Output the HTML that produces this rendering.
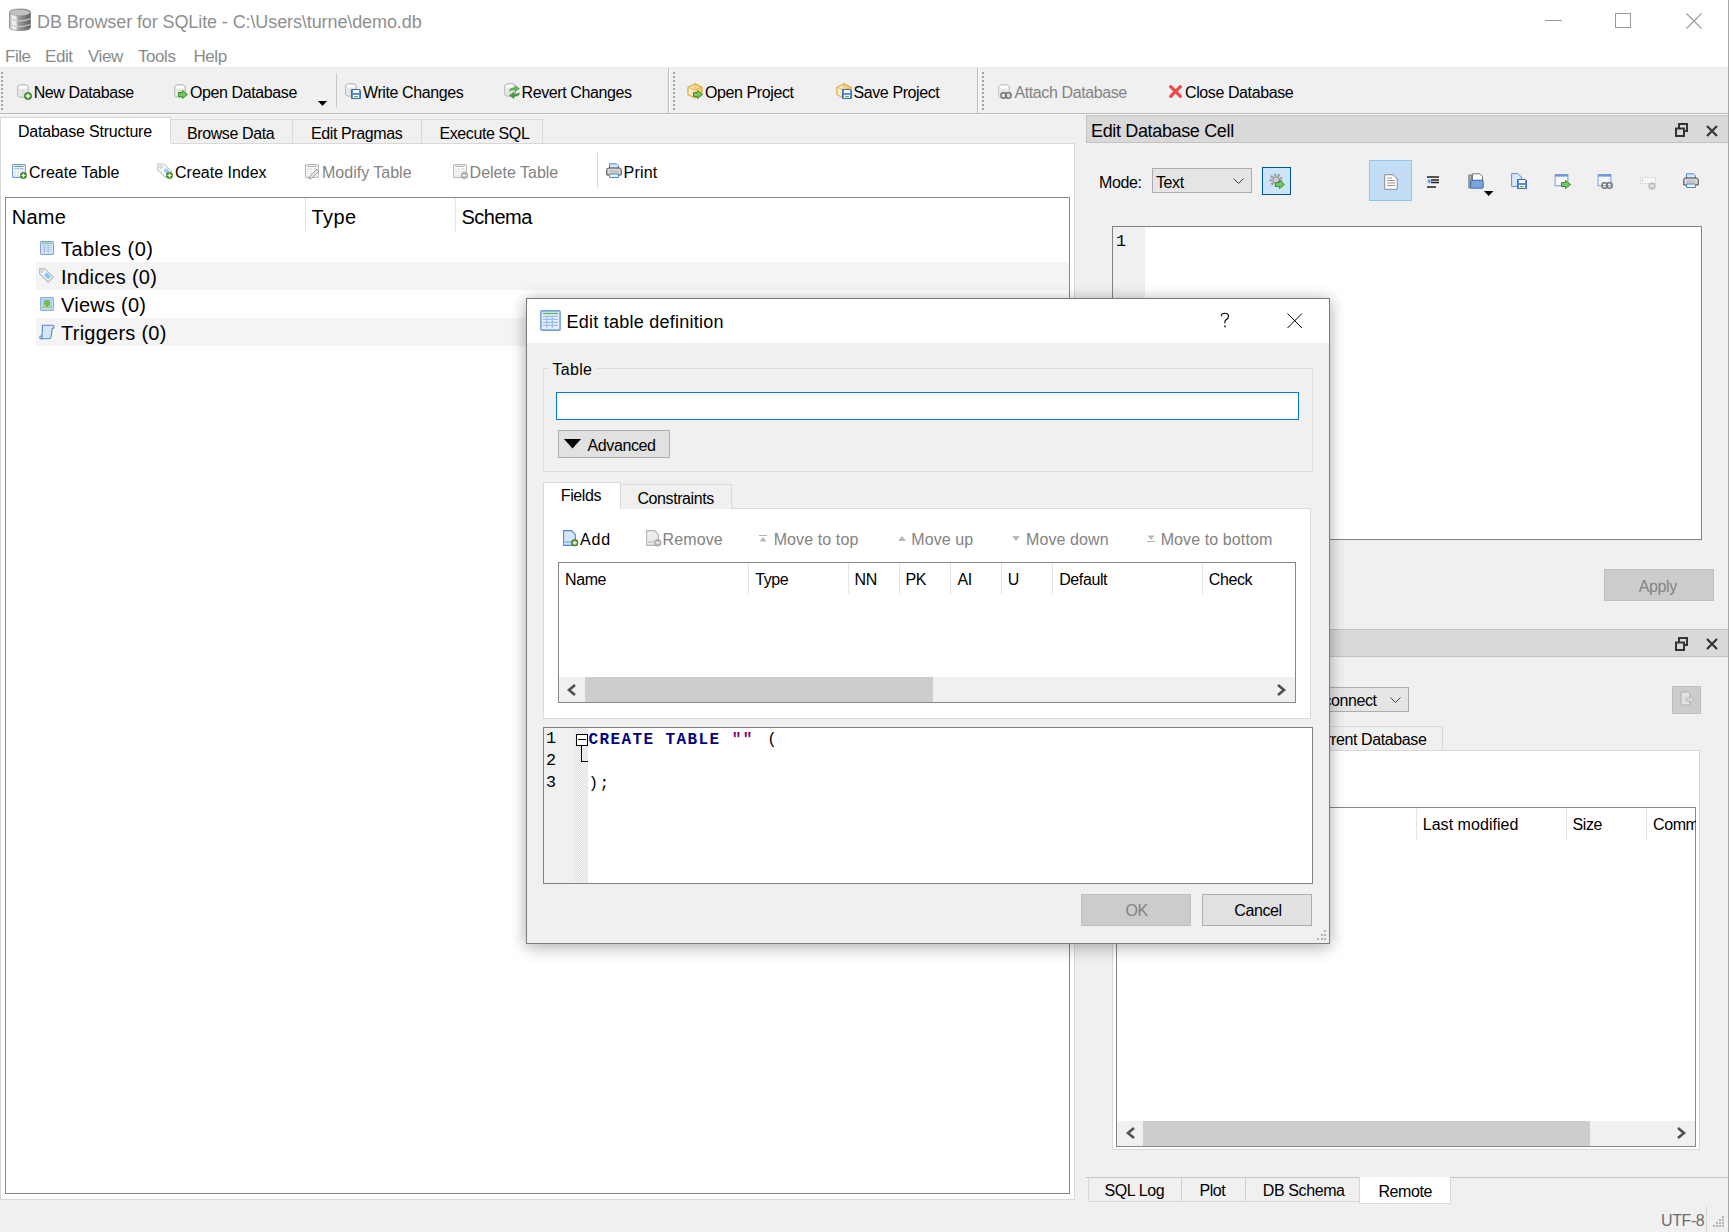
<!DOCTYPE html>
<html><head><meta charset="utf-8">
<style>
*{box-sizing:border-box;margin:0;padding:0}
html,body{width:1729px;height:1232px;overflow:hidden;background:#f0f0f0;font-family:"Liberation Sans",sans-serif;color:#000}
.a{position:absolute}
.t{position:absolute;white-space:nowrap;line-height:1;font-size:16px;letter-spacing:-0.4px}
.dis{color:#838383}
.ln{position:absolute;background:#a0a0a0}
svg{position:absolute;overflow:visible}
</style></head><body>

<!-- ============ TITLE BAR ============ -->
<div class="a" style="left:0;top:0;width:1729px;height:68px;background:#fff"></div>
<svg style="left:9px;top:8px" width="23" height="23" viewBox="0 0 23 23">
  <defs><linearGradient id="dbg" x1="0" x2="1"><stop offset="0" stop-color="#a8a8a8"/><stop offset="0.15" stop-color="#f4f4f4"/><stop offset="0.3" stop-color="#e8e8e8"/><stop offset="0.42" stop-color="#a0a0a0"/><stop offset="1" stop-color="#5e5e5e"/></linearGradient></defs>
  <path d="M0.5 4.5 Q0.5 1 11 1 Q21.5 1 21.5 4.5 L21.5 19.5 Q21.5 22.5 11 22.5 Q0.5 22.5 0.5 19.5 Z" fill="url(#dbg)" stroke="#707070" stroke-width="0.6"/>
  <ellipse cx="11" cy="4.6" rx="10" ry="3.2" fill="#c2c2c2" stroke="#8a8a8a" stroke-width="0.5"/>
  <path d="M0.8 10.8 Q11 15 21.2 10.8" stroke="#c8c8c8" stroke-width="1.3" fill="none"/>
  <path d="M0.8 16.5 Q11 20.7 21.2 16.5" stroke="#c8c8c8" stroke-width="1.3" fill="none"/>
</svg>
<div class="t" style="left:37px;top:12.8px;font-size:18px;letter-spacing:-0.1px;color:#8f8f8f">DB Browser for SQLite - C:\Users\turne\demo.db</div>
<!-- window controls -->
<div class="a" style="left:1545px;top:20px;width:17px;height:1px;background:#9a9a9a"></div>
<div class="a" style="left:1615px;top:13px;width:16px;height:15px;border:1px solid #9a9a9a"></div>
<svg style="left:1686px;top:13px" width="16" height="16" viewBox="0 0 16 16"><path d="M0.5 0.5 L15.5 15.5 M15.5 0.5 L0.5 15.5" stroke="#9a9a9a" stroke-width="1.1"/></svg>

<!-- menu -->
<div class="t" style="left:5px;top:48.4px;font-size:17px;color:#8a8a8a;letter-spacing:-0.45px">File</div>
<div class="t" style="left:45px;top:48.4px;font-size:17px;color:#8a8a8a;letter-spacing:-0.45px">Edit</div>
<div class="t" style="left:88px;top:48.4px;font-size:17px;color:#8a8a8a;letter-spacing:-0.45px">View</div>
<div class="t" style="left:138px;top:48.4px;font-size:17px;color:#8a8a8a;letter-spacing:-0.45px">Tools</div>
<div class="t" style="left:193.5px;top:48.4px;font-size:17px;color:#8a8a8a;letter-spacing:-0.45px">Help</div>

<!-- ============ TOOLBAR ============ -->
<div class="a" style="left:0;top:67px;width:1729px;height:1px;background:#ececec"></div>
<div class="a" style="left:0;top:69px;width:1729px;height:44px;background:#f0f0f0"></div>
<div class="a" style="left:0;top:113px;width:1729px;height:1px;background:#b8b8b8"></div>
<div class="a" style="left:0;top:114px;width:1729px;height:1px;background:#fbfbfb"></div>
<!-- handles -->
<div class="a" style="left:1px;top:72px;width:2px;height:38px;background:repeating-linear-gradient(to bottom,#a4a4a4 0 2px,transparent 2px 4px)"></div>
<div class="a" style="left:668px;top:68px;width:1px;height:45px;background:#b8b8b8"></div>
<div class="a" style="left:669px;top:68px;width:1px;height:45px;background:#fff"></div>
<div class="a" style="left:673px;top:72px;width:2px;height:38px;background:repeating-linear-gradient(to bottom,#a4a4a4 0 2px,transparent 2px 4px)"></div>
<div class="a" style="left:977px;top:68px;width:1px;height:45px;background:#b8b8b8"></div>
<div class="a" style="left:978px;top:68px;width:1px;height:45px;background:#fff"></div>
<div class="a" style="left:982px;top:72px;width:2px;height:38px;background:repeating-linear-gradient(to bottom,#a4a4a4 0 2px,transparent 2px 4px)"></div>
<div class="a" style="left:336px;top:73px;width:1px;height:35px;background:#c8c8c8"></div>

<div class="t" style="left:33.7px;top:84.6px">New Database</div>
<div class="t" style="left:190px;top:84.6px">Open Database</div>
<svg style="left:318px;top:101px" width="10" height="6"><path d="M0 0 L9 0 L4.5 5 Z" fill="#000"/></svg>
<div class="t" style="left:363px;top:84.6px">Write Changes</div>
<div class="t" style="left:521.5px;top:84.6px">Revert Changes</div>
<div class="t" style="left:705px;top:84.6px">Open Project</div>
<div class="t" style="left:853.5px;top:84.6px">Save Project</div>
<div class="t dis" style="left:1014.5px;top:84.6px">Attach Database</div>
<div class="t" style="left:1185px;top:84.6px">Close Database</div>

<!-- ============ MAIN TABS ============ -->
<div class="a" style="left:170px;top:119px;width:373px;height:26px;background:#f0f0f0;border:1px solid #d9d9d9;border-bottom:none"></div>
<div class="a" style="left:292px;top:119px;width:1px;height:26px;background:#d9d9d9"></div>
<div class="a" style="left:421px;top:119px;width:1px;height:26px;background:#d9d9d9"></div>
<div class="a" style="left:0;top:117px;width:171px;height:30px;background:#fff;border:1px solid #d9d9d9;border-bottom:none"></div>
<div class="t" style="left:18px;top:124px;letter-spacing:-0.22px">Database Structure</div>
<div class="t" style="left:187px;top:126.3px">Browse Data</div>
<div class="t" style="left:311px;top:126.3px">Edit Pragmas</div>
<div class="t" style="left:439.5px;top:126.3px">Execute SQL</div>

<!-- main panel -->
<div class="a" style="left:0;top:143px;width:1075px;height:1057px;background:#fff;border:1px solid #d9d9d9;border-top:none"></div>
<div class="a" style="left:171px;top:143px;width:904px;height:1px;background:#d9d9d9"></div>

<!-- inner toolbar -->
<div class="t" style="left:29px;top:165px;letter-spacing:0px">Create Table</div>
<div class="t" style="left:175px;top:165px;letter-spacing:0px">Create Index</div>
<div class="t dis" style="left:322px;top:165px;letter-spacing:0px">Modify Table</div>
<div class="t dis" style="left:469.6px;top:165px;letter-spacing:0px">Delete Table</div>
<div class="a" style="left:597px;top:153px;width:1px;height:35px;background:#d8d8d8"></div>
<div class="t" style="left:623.6px;top:165px;letter-spacing:0.2px">Print</div>

<!-- tree -->
<div class="a" style="left:5px;top:197px;width:1065px;height:997px;border:1px solid #828790;background:#fff"></div>
<div class="a" style="left:305px;top:198px;width:1px;height:35px;background:#e5e5e5"></div>
<div class="a" style="left:455px;top:198px;width:1px;height:35px;background:#e5e5e5"></div>
<div class="t" style="left:11.7px;top:206.5px;font-size:20px;letter-spacing:0.25px">Name</div>
<div class="t" style="left:311.6px;top:206.6px;font-size:20px;letter-spacing:0.4px">Type</div>
<div class="t" style="left:461.5px;top:206.6px;font-size:20px;letter-spacing:-0.5px">Schema</div>
<div class="a" style="left:36px;top:262px;width:1033px;height:28px;background:#f4f4f4"></div>
<div class="a" style="left:36px;top:318px;width:1033px;height:28px;background:#f4f4f4"></div>
<div class="t" style="left:61px;top:238.9px;font-size:20px;letter-spacing:0.45px">Tables (0)</div>
<div class="t" style="left:61px;top:266.9px;font-size:20px;letter-spacing:0.25px">Indices (0)</div>
<div class="t" style="left:61px;top:294.9px;font-size:20px;letter-spacing:0.25px">Views (0)</div>
<div class="t" style="left:61px;top:322.9px;font-size:20px;letter-spacing:0.25px">Triggers (0)</div>



<!-- ============ RIGHT DOCK 1 ============ -->
<div class="a" style="left:1086px;top:115px;width:643px;height:28px;background:#d9d9d9;border:1px solid #c2c2c2;border-right:none"></div>
<div class="t" style="left:1091px;top:121.6px;font-size:18px;letter-spacing:-0.35px">Edit Database Cell</div>
<div class="t" style="left:1099px;top:175px">Mode:</div>
<div class="a" style="left:1152px;top:168px;width:100px;height:25px;background:#e5e5e5;border:1px solid #adadad"></div>
<div class="t" style="left:1156px;top:175px">Text</div>
<svg style="left:1233px;top:178px" width="11" height="7"><path d="M0.5 0.5 L5.5 5.5 L10.5 0.5" stroke="#404040" fill="none" stroke-width="1"/></svg>
<div class="a" style="left:1262px;top:167px;width:29px;height:28px;background:#cce4f7;border:1px solid #005499"></div>
<div class="a" style="left:1369px;top:160px;width:43px;height:41px;background:#c2ddf4;border:1px solid #8ec4f0"></div>
<!-- editor -->
<div class="a" style="left:1112px;top:226px;width:590px;height:314px;background:#fff;border:1px solid #828282"></div>
<div class="a" style="left:1113px;top:227px;width:32px;height:312px;background:#f0f0f0"></div>
<div class="t" style="left:1116px;top:234.3px;font-family:'Liberation Mono',monospace;font-size:16.8px;letter-spacing:0">1</div>
<!-- apply -->
<div class="a" style="left:1604px;top:569px;width:110px;height:32px;background:#cccccc;border:1px solid #bfbfbf"></div>
<div class="t dis" style="left:1638.8px;top:578.8px">Apply</div>

<!-- ============ RIGHT DOCK 2 ============ -->
<div class="a" style="left:1086px;top:629px;width:643px;height:28px;background:#d9d9d9;border:1px solid #c2c2c2;border-right:none"></div>
<div class="a" style="left:1200px;top:687px;width:209px;height:25px;background:#e5e5e5;border:1px solid #adadad"></div>
<div class="t" style="left:1301.5px;top:692.8px">Disconnect</div>
<svg style="left:1390px;top:697px" width="11" height="7"><path d="M0.5 0.5 L5.5 5.5 L10.5 0.5" stroke="#404040" fill="none" stroke-width="1"/></svg>
<div class="a" style="left:1672px;top:686px;width:29px;height:28px;background:#cccccc;border:1px solid #bfbfbf"></div>
<!-- tab -->
<div class="a" style="left:1112px;top:750px;width:588px;height:400px;background:#fff;border:1px solid #d9d9d9"></div>
<div class="a" style="left:1240px;top:726px;width:203px;height:24px;background:#f0f0f0;border:1px solid #d9d9d9;border-bottom:none"></div>
<div class="t" style="left:1306.5px;top:732.3px">Current Database</div>
<!-- inner table -->
<div class="a" style="left:1116px;top:807px;width:580px;height:340px;background:#fff;border:1px solid #828790"></div>
<div class="a" style="left:1416px;top:808px;width:1px;height:32px;background:#e5e5e5"></div>
<div class="a" style="left:1566px;top:808px;width:1px;height:32px;background:#e5e5e5"></div>
<div class="a" style="left:1646px;top:808px;width:1px;height:32px;background:#e5e5e5"></div>
<div class="t" style="left:1422.7px;top:817px;letter-spacing:0.05px">Last modified</div>
<div class="t" style="left:1572.5px;top:817px">Size</div>
<div class="a" style="left:1653px;top:810px;width:43px;height:28px;overflow:hidden"><div class="t" style="left:0;top:7px">Comment</div></div>
<!-- scrollbar -->
<div class="a" style="left:1117px;top:1121px;width:578px;height:25px;background:#f0f0f0"></div>
<div class="a" style="left:1143px;top:1121px;width:447px;height:25px;background:#cdcdcd"></div>
<svg style="left:1125px;top:1127px" width="11" height="12"><path d="M9 1 L3 6 L9 11" stroke="#505050" stroke-width="2.6" fill="none"/></svg>
<svg style="left:1676px;top:1127px" width="11" height="12"><path d="M2 1 L8 6 L2 11" stroke="#505050" stroke-width="2.6" fill="none"/></svg>

<!-- bottom tabs -->
<div class="a" style="left:1086px;top:1177px;width:643px;height:1px;background:#c4c4c4"></div>
<div class="a" style="left:1088px;top:1178px;width:272px;height:24px;background:#f0f0f0;border:1px solid #d9d9d9;border-top:none"></div>
<div class="a" style="left:1181px;top:1178px;width:1px;height:24px;background:#d0d0d0"></div>
<div class="a" style="left:1245px;top:1178px;width:1px;height:24px;background:#d0d0d0"></div>
<div class="a" style="left:1359px;top:1177px;width:92px;height:27px;background:#fff;border:1px solid #d9d9d9;border-top:none"></div>
<div class="t" style="left:1104.4px;top:1182.9px">SQL Log</div>
<div class="t" style="left:1199.4px;top:1182.9px">Plot</div>
<div class="t" style="left:1262.8px;top:1182.9px">DB Schema</div>
<div class="t" style="left:1378.4px;top:1184px">Remote</div>

<!-- status -->
<div class="t" style="left:1661px;top:1212.9px;color:#6d6d6d">UTF-8</div>
<div class="a" style="left:1706px;top:1206px;width:1px;height:26px;background:#d9d9d9"></div>

<svg width="0" height="0" style="position:absolute;left:0;top:0">
<defs>
 <linearGradient id="gcyl" x1="0" x2="1" y1="0" y2="0"><stop offset="0" stop-color="#f4f4f4"/><stop offset="0.5" stop-color="#dcdcdc"/><stop offset="1" stop-color="#f0f0f0"/></linearGradient>
 <symbol id="cyl" viewBox="0 0 12 14"><path d="M0.7 3 Q0.7 0.7 6 0.7 Q11.3 0.7 11.3 3 L11.3 11 Q11.3 13.3 6 13.3 Q0.7 13.3 0.7 11 Z" fill="url(#gcyl)" stroke="#b4b4b4" stroke-width="1"/><ellipse cx="6" cy="3.2" rx="4.3" ry="1.6" fill="#fff"/></symbol>
 <symbol id="plusg" viewBox="0 0 8 8"><circle cx="4" cy="4" r="3.6" fill="#4e9a2a" stroke="#2f6b17" stroke-width="0.7"/><path d="M4 1.8 V6.2 M1.8 4 H6.2" stroke="#fff" stroke-width="1.4"/></symbol>
 <symbol id="arrowg" viewBox="0 0 10 9"><path d="M0.5 2.5 H4.5 V0.5 L9.5 4.5 L4.5 8.5 V6.5 H0.5 Z" fill="#7cc26a" stroke="#2e9a1a" stroke-width="1"/></symbol>
 <symbol id="floppy" viewBox="0 0 10 10"><path d="M0.5 0.5 H8.5 L9.5 1.5 V9.5 H0.5 Z" fill="#5b8ed6" stroke="#3f6fbf" stroke-width="1"/><rect x="2" y="1" width="6" height="3" fill="#fff"/><rect x="2" y="6" width="6" height="3" fill="#fff"/><rect x="3" y="7" width="4" height="1.4" fill="#6cbf3a"/></symbol>
 <symbol id="refresh" viewBox="0 0 11 14"><path d="M0.5 6 Q1 2.5 6 2.8 V0.6 L10.4 3.6 L6 6.8 V4.8 Q2.5 4.6 0.5 6 Z" fill="#62b85a" stroke="#3c9a36" stroke-width="0.6"/><path d="M10.5 8 Q10 11.5 5 11.2 V13.4 L0.6 10.4 L5 7.2 V9.2 Q8.5 9.4 10.5 8 Z" fill="#4aa046" stroke="#2c7d2a" stroke-width="0.6"/></symbol>
 <linearGradient id="gbox" x1="0" x2="1"><stop offset="0" stop-color="#fff6d8"/><stop offset="1" stop-color="#f6c860"/></linearGradient>
 <symbol id="box" viewBox="0 0 16 16"><path d="M8 0.8 L15 4.3 V11.7 L8 15.2 L1 11.7 V4.3 Z" fill="url(#gbox)" stroke="#d8a840" stroke-width="1.2"/><path d="M8 0.8 V7 M1 4.3 L8 7 L15 4.3" stroke="#e0b050" stroke-width="0.8" fill="none"/></symbol>
 <symbol id="xred" viewBox="0 0 13 13"><path d="M1.8 1.8 L11.2 11.2 M11.2 1.8 L1.8 11.2" stroke="#f04848" stroke-width="3.2" stroke-linecap="square"/></symbol>
 <symbol id="tbl" viewBox="0 0 14 14"><rect x="0.6" y="0.6" width="12.8" height="12.8" rx="1" fill="#fff" stroke="#6b98d8" stroke-width="1.1"/><path d="M2.3 2.5 H11.7" stroke="#5cb65c" stroke-width="1"/><rect x="2.3" y="4.3" width="9.4" height="7.6" fill="#c7daf3" stroke="none"/><path d="M2.3 6.5 H11.7 M2.3 8.5 H11.7 M2.3 10.5 H11.7 M4.3 4.3 V12 M7.5 4.3 V12" stroke="#fff" stroke-width="0.9"/><path d="M2.3 4.3 H11.7" stroke="#8ab0e6" stroke-width="0.8"/></symbol>
 <symbol id="tblg" viewBox="0 0 14 14"><rect x="0.6" y="0.6" width="12.8" height="12.8" rx="1" fill="#fff" stroke="#b8b8b8" stroke-width="1.1"/><path d="M2.3 2.5 H11.7" stroke="#b4b4b4" stroke-width="1"/><rect x="2.3" y="4.3" width="9.4" height="7.6" fill="#dedede"/><path d="M2.3 6.5 H11.7 M2.3 8.5 H11.7 M2.3 10.5 H11.7 M4.3 4.3 V12 M7.5 4.3 V12" stroke="#fff" stroke-width="0.9"/></symbol>
 <symbol id="tag" viewBox="0 0 16 16"><path d="M0.8 1 H7 L14.5 8.5 L8.5 14.5 L0.8 7 Z" fill="#fafafa" stroke="#c4c4c4" stroke-width="1.1"/><circle cx="4" cy="4" r="1.3" fill="none" stroke="#bdbdbd" stroke-width="0.9"/><path d="M6.5 7.5 L9 5 L13 9 L10.5 11.5 Z" fill="#8fcbf7"/></symbol>
 <symbol id="printer" viewBox="0 0 16 16"><path d="M3.5 0.8 H10.5 L12.5 2.8 V7 H3.5 Z" fill="#d6e8fb" stroke="#4a88d0" stroke-width="1"/><path d="M0.8 12 V6.5 Q0.8 5 3 5 H13 Q15.2 5 15.2 6.5 V12 Z" fill="#dcdcdc" stroke="#404040" stroke-width="1"/><rect x="3.5" y="6.8" width="9" height="3.5" fill="#c4c4c4"/><path d="M3.5 11 H12.5 V14.5 H3.5 Z" fill="#f4f4f4" stroke="#4a88d0" stroke-width="1"/></symbol>
 <symbol id="chain" viewBox="0 0 12 7"><rect x="0.8" y="0.8" width="5.6" height="5.4" rx="2.6" fill="none" stroke="#777" stroke-width="1.5"/><rect x="5.6" y="0.8" width="5.6" height="5.4" rx="2.6" fill="none" stroke="#777" stroke-width="1.5"/></symbol>
 <symbol id="doc" viewBox="0 0 14 16"><path d="M0.7 0.7 H9 L13.3 5 V15.3 H0.7 Z" fill="#fff" stroke="#8a8a8a" stroke-width="1"/><path d="M3 4 H8 M3 6.5 H11 M3 9 H11 M3 11.5 H11" stroke="#9c9c9c" stroke-width="1"/></symbol>
 <symbol id="win" viewBox="0 0 16 15"><rect x="0.6" y="0.6" width="14.8" height="13" fill="#f8f8ff" stroke="#6e9ad8" stroke-width="1.1"/><rect x="0.6" y="0.6" width="14.8" height="2.4" fill="#6e9ad8"/></symbol>
 <symbol id="tree_tbl" viewBox="0 0 14 14"><rect x="0.6" y="0.6" width="12.8" height="12.8" rx="0.8" fill="#e8f0fb" stroke="#7aa3dc" stroke-width="1.1"/><path d="M2 2.3 H12" stroke="#5cb65c" stroke-width="0.9"/><path d="M2 4.2 H12 M2 6.2 H12 M2 8.2 H12 M2 10.2 H12 M4.5 4.2 V12 M8.2 4.2 V12" stroke="#9bbbe8" stroke-width="0.8"/></symbol>
 <symbol id="tree_tag" viewBox="0 0 16 16"><path d="M0.8 1 H6.2 L15 9.8 L9.8 15 L0.8 6 Z" fill="#fbfbfb" stroke="#b4b4b4" stroke-width="1.3" stroke-linejoin="round"/><circle cx="3.6" cy="3.8" r="1.2" fill="none" stroke="#b0b0b0" stroke-width="0.9"/><path d="M5.2 7.6 L8.2 4.6 L12.8 9.2 L9.8 12.2 Z" fill="#86c6f6"/></symbol>
 <symbol id="tree_view" viewBox="0 0 14 14"><rect x="0.6" y="0.6" width="12.8" height="12.8" rx="0.8" fill="#d2e4f8" stroke="#88aadd" stroke-width="1.1"/><rect x="2" y="2" width="10" height="9" fill="#a9cdf0"/><circle cx="7" cy="6" r="3" fill="#6cc04a"/><rect x="2" y="9" width="10" height="2.4" fill="#9ed08a"/><path d="M7 8 V10" stroke="#c88a3a" stroke-width="1.2"/></symbol>
 <symbol id="tree_trig" viewBox="0 0 16 16"><path d="M3.5 1.2 H13.2 Q15 1.2 15 3 Q15 4.6 13.2 4.6 L12 13 Q11.7 14.8 10 14.8 H2 Q0.8 14.8 0.8 13.4 Q0.8 12 2.2 12 H3 Z" fill="#d6e6f8" stroke="#4f86cf" stroke-width="1.1"/><path d="M2.2 12 Q3.6 12 3.6 13.4 Q3.6 14.8 2 14.8" fill="none" stroke="#4f86cf" stroke-width="0.9"/></symbol>
</defs></svg>
<!-- toolbar icons -->
<svg style="left:17px;top:84px" width="12" height="14"><use href="#cyl"/></svg>
<svg style="left:24px;top:91.5px" width="8" height="8"><use href="#plusg"/></svg>
<svg style="left:174px;top:84px" width="12" height="14"><use href="#cyl"/></svg>
<svg style="left:178px;top:90px" width="10" height="9"><use href="#arrowg"/></svg>
<svg style="left:345px;top:83px" width="12" height="14"><use href="#cyl"/></svg>
<svg style="left:351px;top:89px" width="10" height="10"><use href="#floppy"/></svg>
<svg style="left:504px;top:83px" width="12" height="14"><use href="#cyl"/></svg>
<svg style="left:509px;top:85px" width="11" height="14"><use href="#refresh"/></svg>
<svg style="left:687px;top:83px" width="16" height="16"><use href="#box"/></svg>
<svg style="left:693px;top:90px" width="10" height="9"><use href="#arrowg"/></svg>
<svg style="left:836px;top:83px" width="16" height="16"><use href="#box"/></svg>
<svg style="left:842px;top:89px" width="10" height="10"><use href="#floppy"/></svg>
<svg style="left:998px;top:84px" width="12" height="14" opacity="0.8"><use href="#cyl"/></svg>
<svg style="left:1000px;top:92px" width="12" height="7"><use href="#chain"/></svg>
<svg style="left:1169px;top:84.5px" width="13" height="13"><use href="#xred"/></svg>
<!-- inner toolbar icons -->
<svg style="left:12px;top:164px" width="14" height="14"><use href="#tbl"/></svg>
<svg style="left:20px;top:172px" width="7" height="7"><use href="#plusg"/></svg>
<svg style="left:157px;top:163px" width="16" height="16"><use href="#tag"/></svg>
<svg style="left:166px;top:172px" width="7" height="7"><use href="#plusg"/></svg>
<svg style="left:305px;top:164px" width="14" height="14"><use href="#tblg"/></svg>
<svg style="left:308px;top:168px" width="12" height="12"><path d="M1 11 L2 8 L9 1 L11 3 L4 10 Z" fill="#e4e4e4" stroke="#9a9a9a" stroke-width="0.9"/></svg>
<svg style="left:453px;top:164px" width="14" height="14"><use href="#tblg"/></svg>
<svg style="left:461px;top:172px" width="7" height="7"><circle cx="3.5" cy="3.5" r="3.2" fill="#bdbdbd" stroke="#8c8c8c" stroke-width="0.7"/><path d="M1.6 3.5 H5.4" stroke="#fff" stroke-width="1.2"/></svg>
<svg style="left:606px;top:163px" width="16" height="16"><use href="#printer"/></svg>
<!-- tree icons -->
<svg style="left:40px;top:241px" width="14" height="14"><use href="#tree_tbl"/></svg>
<svg style="left:39px;top:268px" width="15" height="15"><use href="#tree_tag"/></svg>
<svg style="left:40px;top:297px" width="14" height="14"><use href="#tree_view"/></svg>
<svg style="left:39px;top:324px" width="16" height="16"><use href="#tree_trig"/></svg>
<!-- window right border -->
<div class="a" style="left:1728px;top:0;width:1px;height:1232px;background:#a8a8a8"></div>
<!-- dock 1 icons -->
<svg style="left:1675px;top:123px" width="13" height="14" viewBox="0 0 13 14"><rect x="4" y="1" width="8" height="7" fill="none" stroke="#333" stroke-width="2"/><rect x="1" y="5.5" width="8" height="7.5" fill="#d9d9d9" stroke="#333" stroke-width="2"/></svg>
<svg style="left:1705.5px;top:124.5px" width="12" height="12" viewBox="0 0 12 12"><path d="M1 1 L11 11 M11 1 L1 11" stroke="#333" stroke-width="2.2"/></svg>
<svg style="left:1675px;top:637px" width="13" height="14" viewBox="0 0 13 14"><rect x="4" y="1" width="8" height="7" fill="none" stroke="#333" stroke-width="2"/><rect x="1" y="5.5" width="8" height="7.5" fill="#d9d9d9" stroke="#333" stroke-width="2"/></svg>
<svg style="left:1705.5px;top:638px" width="12" height="12" viewBox="0 0 12 12"><path d="M1 1 L11 11 M11 1 L1 11" stroke="#333" stroke-width="2.2"/></svg>
<svg style="left:1269px;top:173px" width="16" height="16" viewBox="0 0 16 16"><circle cx="7" cy="7" r="5" fill="none" stroke="#9c9c9c" stroke-width="3" stroke-dasharray="2 1.5"/><circle cx="7" cy="7" r="3.2" fill="#d0d0d0" stroke="#8a8a8a" stroke-width="1"/></svg>
<svg style="left:1275px;top:180px" width="10" height="9"><use href="#arrowg"/></svg>
<svg style="left:1384px;top:174px" width="14" height="16"><use href="#doc"/></svg>
<svg style="left:1426px;top:176px" width="13" height="12" viewBox="0 0 13 12"><path d="M1 1 H13 M5 4 H13 M5 6.5 H13 M1 11 H10" stroke="#222" stroke-width="1.3"/><path d="M1.5 5.2 L4 5.2" stroke="#5a9ae8" stroke-width="1.5"/><path d="M2.5 3.5 L4.5 5.2 L2.5 7" stroke="#5a9ae8" stroke-width="1.2" fill="none"/></svg>
<svg style="left:1468px;top:173px" width="16" height="16" viewBox="0 0 16 16"><rect x="0.8" y="2" width="3" height="13" fill="#a8a8a8" stroke="#707070" stroke-width="0.8"/><path d="M4.5 0.8 H12 L14.5 3.5 V8 H4.5 Z" fill="#fff" stroke="#777" stroke-width="1"/><rect x="2.6" y="7.2" width="12.6" height="8" rx="1" fill="#7aa3d8" stroke="#3d6db2" stroke-width="1"/></svg>
<svg style="left:1484px;top:191px" width="10" height="6"><path d="M0 0 L9.5 0 L4.75 5 Z" fill="#000"/></svg>
<svg style="left:1511px;top:173px" width="11" height="14" viewBox="0 0 11 14"><path d="M0.6 0.6 H7 L10.4 4 V13.4 H0.6 Z" fill="#d8e8fa" stroke="#5a8fd4" stroke-width="1"/></svg>
<svg style="left:1517px;top:179px" width="10" height="10"><use href="#floppy"/></svg>
<svg style="left:1554px;top:174px" width="15" height="13"><use href="#win"/></svg>
<svg style="left:1561px;top:180px" width="10" height="9"><use href="#arrowg"/></svg>
<svg style="left:1597px;top:174px" width="15" height="13"><use href="#win"/></svg>
<svg style="left:1601px;top:182px" width="12" height="7"><use href="#chain"/></svg>
<svg style="left:1640px;top:177px" width="16" height="13" viewBox="0 0 16 13"><rect x="0.5" y="0.5" width="15" height="6" fill="#fafafa" stroke="#dcdcdc"/><path d="M2.5 2 V5" stroke="#c8c8c8"/><circle cx="12" cy="9" r="3.3" fill="#c8c8c8" stroke="#b0b0b0" stroke-width="0.8"/><path d="M10.2 9 H13.8" stroke="#fff" stroke-width="1.1"/></svg>
<svg style="left:1683px;top:173px" width="16" height="16"><use href="#printer"/></svg>
<svg style="left:1679px;top:691px" width="16" height="16" viewBox="0 0 16 16" opacity="0.55"><path d="M2 1 H9 L11 3 V14 H2 Z" fill="#f4f4f4" stroke="#9a9a9a"/><path d="M7 7 H11 V5 L15 8.5 L11 12 V10 H7 Z" fill="#e8e8e8" stroke="#9a9a9a" stroke-width="0.8"/></svg>
<!-- status size grip -->
<svg style="left:1713px;top:1216px" width="12" height="12" viewBox="0 0 12 12"><g fill="#b4b4b4"><rect x="9" y="0" width="2" height="2"/><rect x="6" y="3" width="2" height="2"/><rect x="9" y="3" width="2" height="2"/><rect x="3" y="6" width="2" height="2"/><rect x="6" y="6" width="2" height="2"/><rect x="9" y="6" width="2" height="2"/><rect x="0" y="9" width="2" height="2"/><rect x="3" y="9" width="2" height="2"/><rect x="6" y="9" width="2" height="2"/><rect x="9" y="9" width="2" height="2"/></g></svg>

<!-- ============ DIALOG ============ -->
<div class="a" style="left:526px;top:298px;width:804px;height:646px;background:#f0f0f0;border:1px solid #7a7a7a;box-shadow:0 0 14px rgba(0,0,0,0.2),0 6px 16px rgba(0,0,0,0.16)"></div>
<div class="a" style="left:527px;top:299px;width:802px;height:44px;background:#fff"></div>
<div class="t" style="left:566.5px;top:313.3px;font-size:18px;letter-spacing:0.25px">Edit table definition</div>
<svg style="left:1220px;top:312px" width="10" height="17" viewBox="0 0 10 17"><path d="M1.3 4.2 Q1.3 1.2 4.9 1.2 Q8.5 1.2 8.5 4.3 Q8.5 6.6 5.6 8.2 Q4.9 8.7 4.9 10 V11.3" fill="none" stroke="#000" stroke-width="1.15"/><rect x="4.2" y="13.6" width="1.5" height="1.6" fill="#000"/></svg>
<svg style="left:1287px;top:313px" width="16" height="16" viewBox="0 0 16 16"><path d="M0.5 0.5 L15 15 M15 0.5 L0.5 15" stroke="#000" stroke-width="1"/></svg>

<!-- group box -->
<div class="a" style="left:543px;top:368px;width:770px;height:104px;border:1px solid #dcdcdc"></div>
<div class="a" style="left:549px;top:360px;width:48px;height:16px;background:#f0f0f0"></div>
<div class="t" style="left:552.5px;top:362.2px;letter-spacing:0.3px">Table</div>
<div class="a" style="left:556px;top:392px;width:743px;height:28px;background:#fff;border:1px solid #0078d7"></div>
<div class="a" style="left:558px;top:430px;width:112px;height:28px;background:#e1e1e1;border:1px solid #adadad"></div>
<svg style="left:564px;top:439px" width="18" height="10"><path d="M0 0 L17 0 L8.5 9.5 Z" fill="#000"/></svg>
<div class="t" style="left:587.6px;top:437.7px">Advanced</div>

<!-- tab widget -->
<div class="a" style="left:543px;top:508px;width:768px;height:211px;background:#fff;border:1px solid #d9d9d9"></div>
<div class="a" style="left:620px;top:484px;width:112px;height:25px;background:#f0f0f0;border:1px solid #d9d9d9;border-bottom:none"></div>
<div class="a" style="left:543px;top:482px;width:78px;height:27px;background:#fff;border:1px solid #d9d9d9;border-bottom:none"></div>
<div class="t" style="left:560.8px;top:488.2px">Fields</div>
<div class="t" style="left:637.4px;top:491px">Constraints</div>

<div class="t" style="left:580px;top:531.6px;letter-spacing:0.8px">Add</div>
<div class="t dis" style="left:662.6px;top:531.6px;letter-spacing:0.1px">Remove</div>
<div class="t dis" style="left:773.7px;top:531.6px;letter-spacing:0.1px">Move to top</div>
<div class="t dis" style="left:911.3px;top:531.6px;letter-spacing:0.1px">Move up</div>
<div class="t dis" style="left:1026px;top:531.6px;letter-spacing:0.1px">Move down</div>
<div class="t dis" style="left:1160.7px;top:531.6px;letter-spacing:0.1px">Move to bottom</div>

<!-- fields table -->
<div class="a" style="left:558px;top:562px;width:738px;height:141px;background:#fff;border:1px solid #828790"></div>
<div class="a" style="left:748px;top:563px;width:1px;height:31px;background:#e5e5e5"></div>
<div class="a" style="left:848px;top:563px;width:1px;height:31px;background:#e5e5e5"></div>
<div class="a" style="left:899px;top:563px;width:1px;height:31px;background:#e5e5e5"></div>
<div class="a" style="left:950px;top:563px;width:1px;height:31px;background:#e5e5e5"></div>
<div class="a" style="left:1001px;top:563px;width:1px;height:31px;background:#e5e5e5"></div>
<div class="a" style="left:1052px;top:563px;width:1px;height:31px;background:#e5e5e5"></div>
<div class="a" style="left:1202px;top:563px;width:1px;height:31px;background:#e5e5e5"></div>
<div class="t" style="left:565px;top:571.6px">Name</div>
<div class="t" style="left:755.2px;top:571.6px">Type</div>
<div class="t" style="left:854.6px;top:571.6px">NN</div>
<div class="t" style="left:905.5px;top:571.6px">PK</div>
<div class="t" style="left:957.5px;top:571.6px">AI</div>
<div class="t" style="left:1007.7px;top:571.6px">U</div>
<div class="t" style="left:1059.2px;top:571.6px">Default</div>
<div class="t" style="left:1208.8px;top:571.6px">Check</div>
<div class="a" style="left:559px;top:677px;width:736px;height:25px;background:#f0f0f0"></div>
<div class="a" style="left:585px;top:677px;width:348px;height:25px;background:#cdcdcd"></div>
<svg style="left:566px;top:684px" width="11" height="12"><path d="M9 1 L3 6 L9 11" stroke="#505050" stroke-width="2.6" fill="none"/></svg>
<svg style="left:1276px;top:684px" width="11" height="12"><path d="M2 1 L8 6 L2 11" stroke="#505050" stroke-width="2.6" fill="none"/></svg>

<!-- sql editor -->
<div class="a" style="left:543px;top:727px;width:770px;height:157px;background:#fff;border:1px solid #828282"></div>
<div class="a" style="left:544px;top:728px;width:30px;height:155px;background:#f0f0f0"></div>
<div class="a" style="left:574px;top:728px;width:14px;height:155px;background:repeating-conic-gradient(#dedede 0 25%,#f8f8f8 0 50%) 0 0/2px 2px"></div>
<div class="t" style="left:546px;top:731px;font-family:'Liberation Mono',monospace;font-size:16.8px;letter-spacing:0">1</div>
<div class="t" style="left:546px;top:753px;font-family:'Liberation Mono',monospace;font-size:16.8px;letter-spacing:0">2</div>
<div class="t" style="left:546px;top:775px;font-family:'Liberation Mono',monospace;font-size:16.8px;letter-spacing:0">3</div>
<div class="a" style="left:576px;top:734px;width:12px;height:12px;border:1px solid #000;background:#fff"></div>
<div class="a" style="left:578px;top:739px;width:8px;height:1px;background:#000"></div>
<div class="a" style="left:581px;top:745px;width:1px;height:17px;background:#000"></div>
<div class="a" style="left:581px;top:761px;width:7px;height:1px;background:#000"></div>
<div class="t" style="left:588.6px;top:731.6px;font-family:'Liberation Mono',monospace;font-weight:bold;font-size:16px;letter-spacing:1.4px;color:#000080">CREATE TABLE <span style="color:#800080">""</span> <span style="color:#000;font-weight:normal;position:relative;left:2.5px">(</span></div>
<div class="t" style="left:588.6px;top:775.6px;font-family:'Liberation Mono',monospace;font-weight:normal;font-size:16px;letter-spacing:1.4px;color:#000">);</div>

<!-- buttons -->
<div class="a" style="left:1081px;top:894px;width:110px;height:32px;background:#cccccc;border:1px solid #bfbfbf"></div>
<div class="t dis" style="left:1125.5px;top:902.9px">OK</div>
<div class="a" style="left:1202px;top:894px;width:110px;height:32px;background:#e1e1e1;border:1px solid #adadad"></div>
<div class="t" style="left:1234.3px;top:903.4px">Cancel</div>

<!-- dialog icons -->
<svg style="left:540px;top:309.5px" width="21" height="21" viewBox="0 0 14 14"><use href="#tree_tbl"/></svg>
<svg style="left:563px;top:530px" width="13" height="16" viewBox="0 0 13 16"><path d="M0.6 0.6 H8.5 L12.4 4.5 V15.4 H0.6 Z" fill="#d4e6fa" stroke="#5288d0" stroke-width="1.1"/><path d="M2 12 H10" stroke="#7fb8ee" stroke-width="1.5"/></svg>
<svg style="left:570.5px;top:538.5px" width="7.5" height="7.5"><use href="#plusg"/></svg>
<svg style="left:646px;top:530px" width="13" height="16" viewBox="0 0 13 16"><path d="M0.6 0.6 H8.5 L12.4 4.5 V15.4 H0.6 Z" fill="#ececec" stroke="#b4b4b4" stroke-width="1.1"/><path d="M2 12 H10" stroke="#c8c8c8" stroke-width="1.5"/></svg>
<svg style="left:653.5px;top:538.5px" width="7.5" height="7.5" viewBox="0 0 8 8"><circle cx="4" cy="4" r="3.6" fill="#b8b8b8" stroke="#999" stroke-width="0.7"/><path d="M1.8 4 H6.2" stroke="#fff" stroke-width="1.3"/></svg>
<svg style="left:759px;top:535px" width="8" height="7" viewBox="0 0 8 7"><path d="M0 0.5 H8" stroke="#b0b0b0" stroke-width="1"/><path d="M0.5 6.5 L4 2 L7.5 6.5 Z" fill="#b8b8b8"/></svg>
<svg style="left:898px;top:536px" width="8" height="5" viewBox="0 0 8 5"><path d="M0 5 L4 0 L8 5 Z" fill="#b8b8b8"/></svg>
<svg style="left:1012px;top:536px" width="8" height="5" viewBox="0 0 8 5"><path d="M0 0 L4 5 L8 0 Z" fill="#b8b8b8"/></svg>
<svg style="left:1146.5px;top:535px" width="8" height="7" viewBox="0 0 8 7"><path d="M0.5 0.5 L4 5 L7.5 0.5 Z" fill="#b8b8b8"/><path d="M0 6.5 H8" stroke="#b0b0b0" stroke-width="1"/></svg>
<!-- size grip -->
<svg style="left:1316px;top:930px" width="11" height="11" viewBox="0 0 11 11"><g fill="#b4b4b4"><rect x="8" y="0" width="2" height="2"/><rect x="5" y="4" width="2" height="2"/><rect x="8" y="4" width="2" height="2"/><rect x="1" y="8" width="2" height="2"/><rect x="5" y="8" width="2" height="2"/><rect x="8" y="8" width="2" height="2"/></g></svg>


</body></html>
